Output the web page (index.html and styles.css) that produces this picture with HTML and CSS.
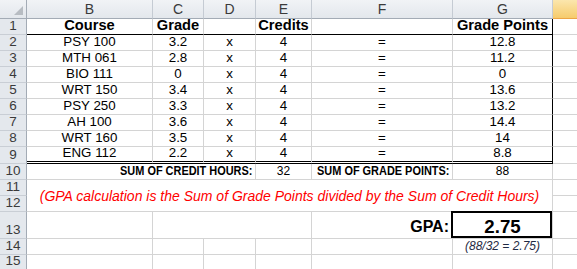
FILE: index.html
```html
<!DOCTYPE html>
<html>
<head>
<meta charset="utf-8">
<link rel="stylesheet" href="styles.css">
</head>
<body>
<div class="sheet">
  <div class="ch corner"><span class="tri"></span></div>
  <div class="ch">B</div><div class="ch">C</div><div class="ch">D</div><div class="ch">E</div><div class="ch">F</div><div class="ch">G</div><div class="ch hsel"></div>

  <div class="rh">1</div>
  <div class="c b1 hd">Course</div><div class="c b1 hd">Grade</div><div class="c b1"></div><div class="c b1 hd">Credits</div><div class="c b1"></div><div class="c b1 rb hd">Grade Points</div><div class="c h"></div>

  <div class="rh">2</div>
  <div class="c">PSY 100</div><div class="c">3.2</div><div class="c">x</div><div class="c">4</div><div class="c">=</div><div class="c rb">12.8</div><div class="c h"></div>

  <div class="rh">3</div>
  <div class="c">MTH 061</div><div class="c">2.8</div><div class="c">x</div><div class="c">4</div><div class="c">=</div><div class="c rb">11.2</div><div class="c h"></div>

  <div class="rh">4</div>
  <div class="c">BIO 111</div><div class="c">0</div><div class="c">x</div><div class="c">4</div><div class="c">=</div><div class="c rb">0</div><div class="c h"></div>

  <div class="rh">5</div>
  <div class="c">WRT 150</div><div class="c">3.4</div><div class="c">x</div><div class="c">4</div><div class="c">=</div><div class="c rb">13.6</div><div class="c h"></div>

  <div class="rh">6</div>
  <div class="c">PSY 250</div><div class="c">3.3</div><div class="c">x</div><div class="c">4</div><div class="c">=</div><div class="c rb">13.2</div><div class="c h"></div>

  <div class="rh">7</div>
  <div class="c">AH 100</div><div class="c">3.6</div><div class="c">x</div><div class="c">4</div><div class="c">=</div><div class="c rb">14.4</div><div class="c h"></div>

  <div class="rh">8</div>
  <div class="c">WRT 160</div><div class="c">3.5</div><div class="c">x</div><div class="c">4</div><div class="c">=</div><div class="c rb">14</div><div class="c h"></div>

  <div class="rh">9</div>
  <div class="c dbl">ENG 112</div><div class="c dbl">2.2</div><div class="c dbl">x</div><div class="c dbl">4</div><div class="c dbl">=</div><div class="c dbl rb">8.8</div><div class="c h"></div>

  <div class="rh">10</div>
  <div class="c span3 rt"><span class="narrow">SUM OF CREDIT HOURS:</span></div><div class="c"><span class="num">32</span></div><div class="c rt"><span class="narrow">SUM OF GRADE POINTS:</span></div><div class="c"><span class="num">88</span></div><div class="c h"></div>

  <div class="rh">11</div>
  <div class="c note">(GPA calculation is the Sum of Grade Points divided by the Sum of Credit Hours)</div><div class="c h"></div>
  <div class="rh">12</div>
  <div class="c h"></div>

  <div class="rh">13</div>
  <div class="c"></div><div class="c span3"></div><div class="c rt gpa-label">GPA:</div><div class="c gpa">2.75</div><div class="c h"></div>

  <div class="rh">14</div>
  <div class="c"></div><div class="c"></div><div class="c"></div><div class="c"></div><div class="c"></div><div class="c calc">(88/32 = 2.75)</div><div class="c h"></div>

  <div class="rh">15</div>
  <div class="c"></div><div class="c"></div><div class="c"></div><div class="c"></div><div class="c"></div><div class="c"></div><div class="c h"></div>
</div>
</body>
</html>
```

FILE: styles.css
```css
html, body {
  margin: 0;
  padding: 0;
  background: #fff;
  overflow: hidden;
}

.sheet {
  display: grid;
  grid-template-columns: 27px 126px 51px 52px 56px 141px 100px 25px;
  grid-template-rows: 19px repeat(8, 16px) 17px 16px 16px 16px 27px 16px 15px;
  font-family: "Liberation Sans", Arial, sans-serif;
  font-size: 13.33px;
  color: #000;
}

.c {
  box-sizing: border-box;
  border-right: 1px solid #d4d4d4;
  border-bottom: 1px solid #d4d4d4;
  display: flex;
  align-items: flex-end;
  justify-content: center;
  padding-bottom: 1px;
  line-height: 15px;
  white-space: nowrap;
  min-width: 0;
}

.c.h {
  border-right: none;
}

.ch {
  box-sizing: border-box;
  background: linear-gradient(#f1f3f6, #e3e7ec);
  border-right: 1px solid #c5cbd3;
  border-bottom: 1px solid #a3abb5;
  color: #3a3a3a;
  font-size: 14px;
  line-height: 18px;
  display: flex;
  align-items: center;
  justify-content: center;
}

.ch.hsel {
  background: linear-gradient(#fbe6ad, #f6cb6d);
  border-bottom-color: #eda545;
  border-right: none;
}

.corner {
  align-items: flex-end;
  justify-content: flex-end;
  padding: 0 3px 3px 0;
  border-right-color: #a3abb5;
}

.tri {
  width: 9px;
  height: 9px;
  background: #b7bcc2;
  clip-path: polygon(100% 0, 100% 100%, 0 100%);
}

.rh {
  box-sizing: border-box;
  background: #e4e8ed;
  border-right: 1px solid #a3abb5;
  border-bottom: 1px solid #c9ced5;
  color: #3a3a3a;
  font-size: 13.5px;
  line-height: 15px;
  padding-bottom: 1px;
  display: flex;
  align-items: flex-end;
  justify-content: center;
}

.hd {
  font-weight: bold;
  font-size: 14.67px;
  line-height: 16px;
}

.b1 {
  border-bottom-color: #000;
}

.rb {
  border-right-color: #000;
}

.dbl {
  border-bottom: 3px double #000;
}

.span3 {
  grid-column: span 3;
}

.rt {
  justify-content: flex-end;
  padding-right: 3px;
}

.narrow {
  display: inline-block;
  font-weight: bold;
  transform: scaleX(0.82);
  transform-origin: right bottom;
}

.num {
  display: inline-block;
  transform: scaleX(0.9);
}

.note {
  grid-column: span 6;
  grid-row: span 2;
  align-items: center;
  padding-bottom: 0;
  color: #ff0000;
  font-style: italic;
  font-size: 14px;
  line-height: 16px;
}

.gpa-label {
  font-weight: bold;
  font-size: 16px;
  line-height: 18px;
  padding-bottom: 2px;
}

.gpa {
  position: relative;
  font-weight: bold;
  font-size: 18.67px;
  line-height: 20px;
  padding-bottom: 1px;
}

.gpa::after {
  content: "";
  position: absolute;
  top: -1px;
  left: -2px;
  right: 0;
  bottom: 0;
  border: 2px solid #000;
}

.calc {
  font-style: italic;
  font-size: 12px;
  line-height: 14px;
  color: #1f2a44;
}
```
